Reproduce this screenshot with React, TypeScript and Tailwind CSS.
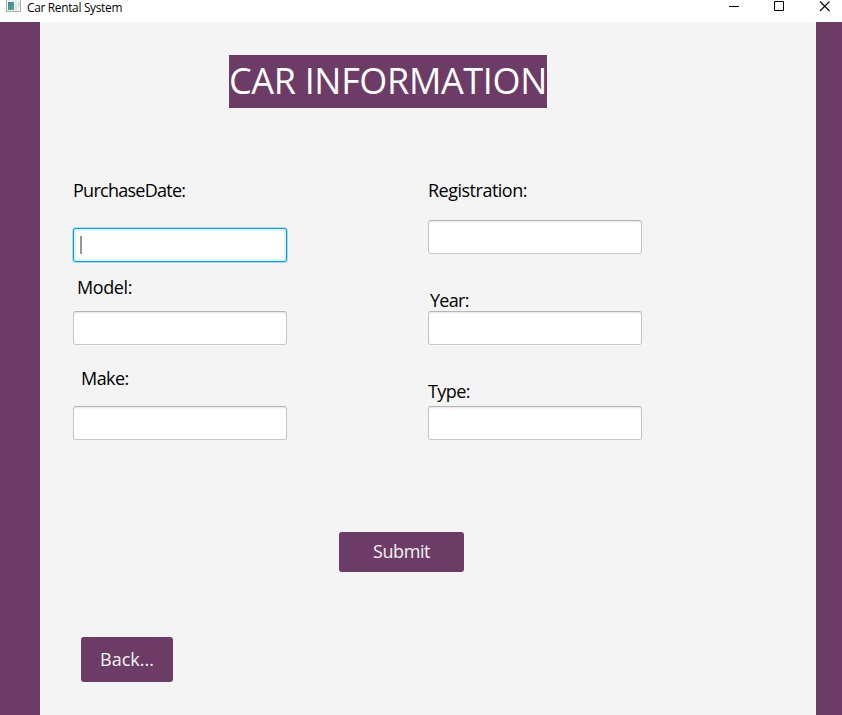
import React from 'react';

type FieldProps = {
  label: string;
  name: string;
  labelClass: string;
  inputClass: string;
};

const plainInput =
  'border-x-[#c4c4c4] border-t-[#b5b5b5] border-b-[#c8c8c8] shadow-[inset_0_2px_2px_-1px_#e4e4e4]';

const focusedInput =
  'border-[#039ed3] shadow-[0_0_0_1px_#a9dcee,inset_0_0_0_2px_#e3f2f8]';

function Field({ label, name, labelClass, inputClass }: FieldProps) {
  return (
    <div className="flex flex-col items-start">
      <label htmlFor={name} className={`h-[23px] text-[18px] leading-6 whitespace-nowrap text-black ${labelClass}`}>
        {label}
      </label>
      <input
        id={name}
        name={name}
        className={`h-[34px] w-[214px] rounded-[3px] border bg-white px-2 outline-none ${inputClass}`}
      />
    </div>
  );
}

function TitleBar() {
  return (
    <header className="flex h-[22px] items-start bg-white">
      <svg className="ml-[6px] shrink-0" width="15" height="13" viewBox="0 0 15 13">
        <defs>
          <linearGradient id="pane" x1="0" y1="0" x2="1" y2="1">
            <stop offset="0" stopColor="#3f7fae" />
            <stop offset="1" stopColor="#4fae79" />
          </linearGradient>
        </defs>
        <rect x="0.5" y="-1" width="14" height="12.5" fill="#f2f4f4" stroke="#a9b0b4" />
        <rect x="2" y="2" width="6" height="8" fill="url(#pane)" />
        <rect x="9" y="2" width="2" height="8" fill="#dce3e3" />
        <rect x="12" y="2" width="1.5" height="5" fill="#cfdad9" />
      </svg>
      <span className="ml-[6px] h-[18px] text-[11.9px] leading-[14px] tracking-[-0.31px] whitespace-nowrap text-black">
        Car Rental System
      </span>
      <svg className="ml-auto shrink-0" width="113" height="14" viewBox="0 0 113 14" fill="none" stroke="#000">
        <path d="M0 6.5h10M45.5 1.5h9v9h-9z" />
        <path d="M91 1.5l9.5 9.5M100.5 1.5L91 11" strokeWidth="1.1" />
      </svg>
    </header>
  );
}

export default function App() {
  return (
    <div className="flex h-[715px] w-[842px] flex-col overflow-hidden font-['Open_Sans','Noto_Sans',sans-serif]">
      <TitleBar />
      <div className="flex flex-1 bg-[#6d3c66] pr-[26px] pl-[40px]">
        <main className="flex flex-1 flex-col items-start bg-[#f4f4f4] pt-[33px]">
          <h1 className="ml-[189px] h-[53px] w-[318px] bg-[#6d3c66] text-[36px] leading-[52px] font-normal tracking-[-0.34px] whitespace-nowrap text-white">
            CAR INFORMATION
          </h1>

          <form className="mt-[70px] ml-[33px] flex gap-[141px]">
            <div className="flex w-[214px] flex-col">
              <div className="relative">
                <Field label="PurchaseDate:" name="purchaseDate" labelClass="mb-[27px] tracking-[-0.74px]" inputClass={focusedInput} />
                <span className="absolute top-[58px] left-[7px] h-[18px] w-[2px] bg-[#969696]" />
              </div>
              <div className="mt-[13px]">
                <Field label="Model:" name="model" labelClass="ml-1 mb-[13px] tracking-[-0.4px]" inputClass={plainInput} />
              </div>
              <div className="mt-[21px]">
                <Field label="Make:" name="make" labelClass="ml-2 mb-[17px] tracking-[-0.55px]" inputClass={plainInput} />
              </div>
            </div>
            <div className="flex w-[214px] flex-col">
              <Field label="Registration:" name="registration" labelClass="mb-[19px] tracking-[-0.5px]" inputClass={plainInput} />
              <div className="mt-[34px]">
                <Field label="Year:" name="year" labelClass="ml-[2px] tracking-[-0.7px]" inputClass={plainInput} />
              </div>
              <div className="mt-[34px]">
                <Field label="Type:" name="type" labelClass="mb-1 tracking-[-0.6px]" inputClass={plainInput} />
              </div>
            </div>
          </form>

          <button className="mt-[92px] ml-[299px] h-[40px] w-[125px] rounded-[3px] bg-[#6d3c66] pb-[2px] text-[18px] leading-6 tracking-[-0.4px] text-[#f4f4f4]">
            Submit
          </button>
          <button className="mt-[65px] ml-[41px] h-[45px] w-[92px] rounded-[3px] bg-[#6d3c66] pb-[2px] text-[18px] leading-6 text-[#f4f4f4]">
            Back...
          </button>
        </main>
      </div>
    </div>
  );
}
